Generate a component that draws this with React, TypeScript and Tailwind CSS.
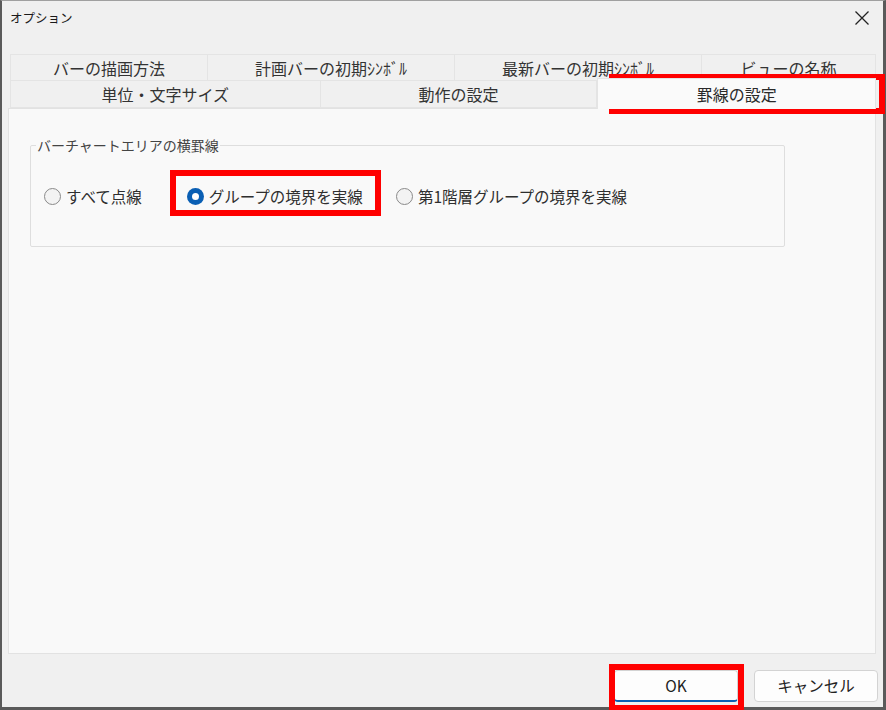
import React from "react";

const font = { fontFamily: '"Noto Sans CJK JP", "Noto Sans", sans-serif' };

function Radio({ checked, label, className }: { checked?: boolean; label: string; className?: string }) {
  return (
    <div className={"flex items-center " + (className ?? "")}>
      {checked ? (
        <div className="w-[17px] h-[17px] rounded-full bg-[#0a5fb4] flex items-center justify-center">
          <div className="w-[7px] h-[7px] rounded-full bg-white" />
        </div>
      ) : (
        <div className="w-[17px] h-[17px] rounded-full border border-[#8a8a8a] bg-[#f3f3f3]" />
      )}
      <span className="ml-[5px] text-[15.5px] leading-[22px] text-[#2e2e2e]">{label}</span>
    </div>
  );
}

function Tab({ label, className }: { label: string; className?: string }) {
  return (
    <div
      className={
        "h-full flex items-center justify-center border border-[#e4e4e4] bg-[#f0f0f0] text-[16px] text-[#333] " +
        (className ?? "")
      }
    >
      {label}
    </div>
  );
}

export default function App() {
  return (
    <div style={font} className="relative w-[886px] h-[710px] bg-[#f0f0f0] flex flex-col border-l-2 border-r-[3px] border-b-[3px] border-t border-l-[#5a5a5a] border-r-[#5a5a5a] border-b-[#5a5a5a] border-t-[#a0a0a0]">
      {/* Title bar */}
      <div className="h-[34px] flex items-center justify-between pl-[8px] pr-[9px] shrink-0">
        <span className="text-[12.5px] text-[#1a1a1a] pt-[1px]">オプション</span>
        <svg width="16" height="16" viewBox="0 0 16 16" className="mr-[4px]">
          <path d="M1.5 1.5 L14.5 14.5 M14.5 1.5 L1.5 14.5" stroke="#222" strokeWidth="1.3" fill="none" />
        </svg>
      </div>

      {/* Tabs + panel */}
      <div className="flex flex-col pl-[6px] pr-[7px] pt-[19px] shrink-0">
        <div className="flex h-[27px] ml-[2px] w-[866px]">
          <Tab label="バーの描画方法" className="w-[198px]" />
          <Tab label="計画バーの初期ｼﾝﾎﾞﾙ" className="w-[247px] border-l-0" />
          <Tab label="最新バーの初期ｼﾝﾎﾞﾙ" className="w-[247px] border-l-0" />
          <Tab label="ビューの名称" className="w-[174px] border-l-0" />
        </div>
        <div className="flex h-[27px] ml-[2px] w-[866px] items-end">
          <Tab label="単位・文字サイズ" className="w-[312px] border-t-0" />
          <Tab label="動作の設定" className="w-[278px] border-t-0 border-l-0" />
          <div className="relative z-10 w-[280px] h-[31px] -mb-[1px] flex items-center justify-center bg-[#fafafa] border border-[#e4e4e4] border-b-0 text-[16px] text-[#2a2a2a]">
            罫線の設定
          </div>
        </div>
        <div className="h-[546px] bg-[#f9f9f9] border border-[#e2e2e2] pl-[21px]">
          <fieldset className="mt-[26px] w-[755px] border border-[#dedede] rounded-[2px] pl-[5px] pb-[39px]">
            <legend className="text-[14px] leading-[20px] text-[#444] px-[1px]">バーチャートエリアの横罫線</legend>
            <div className="flex items-center h-[22px] mt-[30px]">
              <Radio label="すべて点線" className="ml-[8px]" />
              <Radio checked label="グループの境界を実線" className="ml-[45px]" />
              <Radio label="第1階層グループの境界を実線" className="ml-[33px]" />
            </div>
          </fieldset>
        </div>
      </div>

      {/* Footer */}
      <div className="flex-1 flex justify-end items-end pb-[5px] pr-[5px] gap-[16px]">
        <button className="w-[124px] h-[32px] bg-[#fdfdfd] border border-[#d3d3d3] border-b-2 border-b-[#0a5fb4] rounded-[4px] text-[15.5px] text-[#222]">
          OK
        </button>
        <button className="w-[124px] h-[32px] bg-[#fdfdfd] border border-[#d3d3d3] rounded-[4px] text-[15.5px] text-[#222]">
          キャンセル
        </button>
      </div>

      {/* Red annotation boxes */}
      <div className="absolute left-[607px] top-[73px] w-[276px] h-[40px] border-[6px] border-[#ff0000] pointer-events-none" />
      <div className="absolute left-[168px] top-[169px] w-[211px] h-[46px] border-[6px] border-[#ff0000] pointer-events-none" />
      <div className="absolute left-[607px] top-[663px] w-[135px] h-[47px] border-[6px] border-[#ff0000] pointer-events-none" />
    </div>
  );
}
